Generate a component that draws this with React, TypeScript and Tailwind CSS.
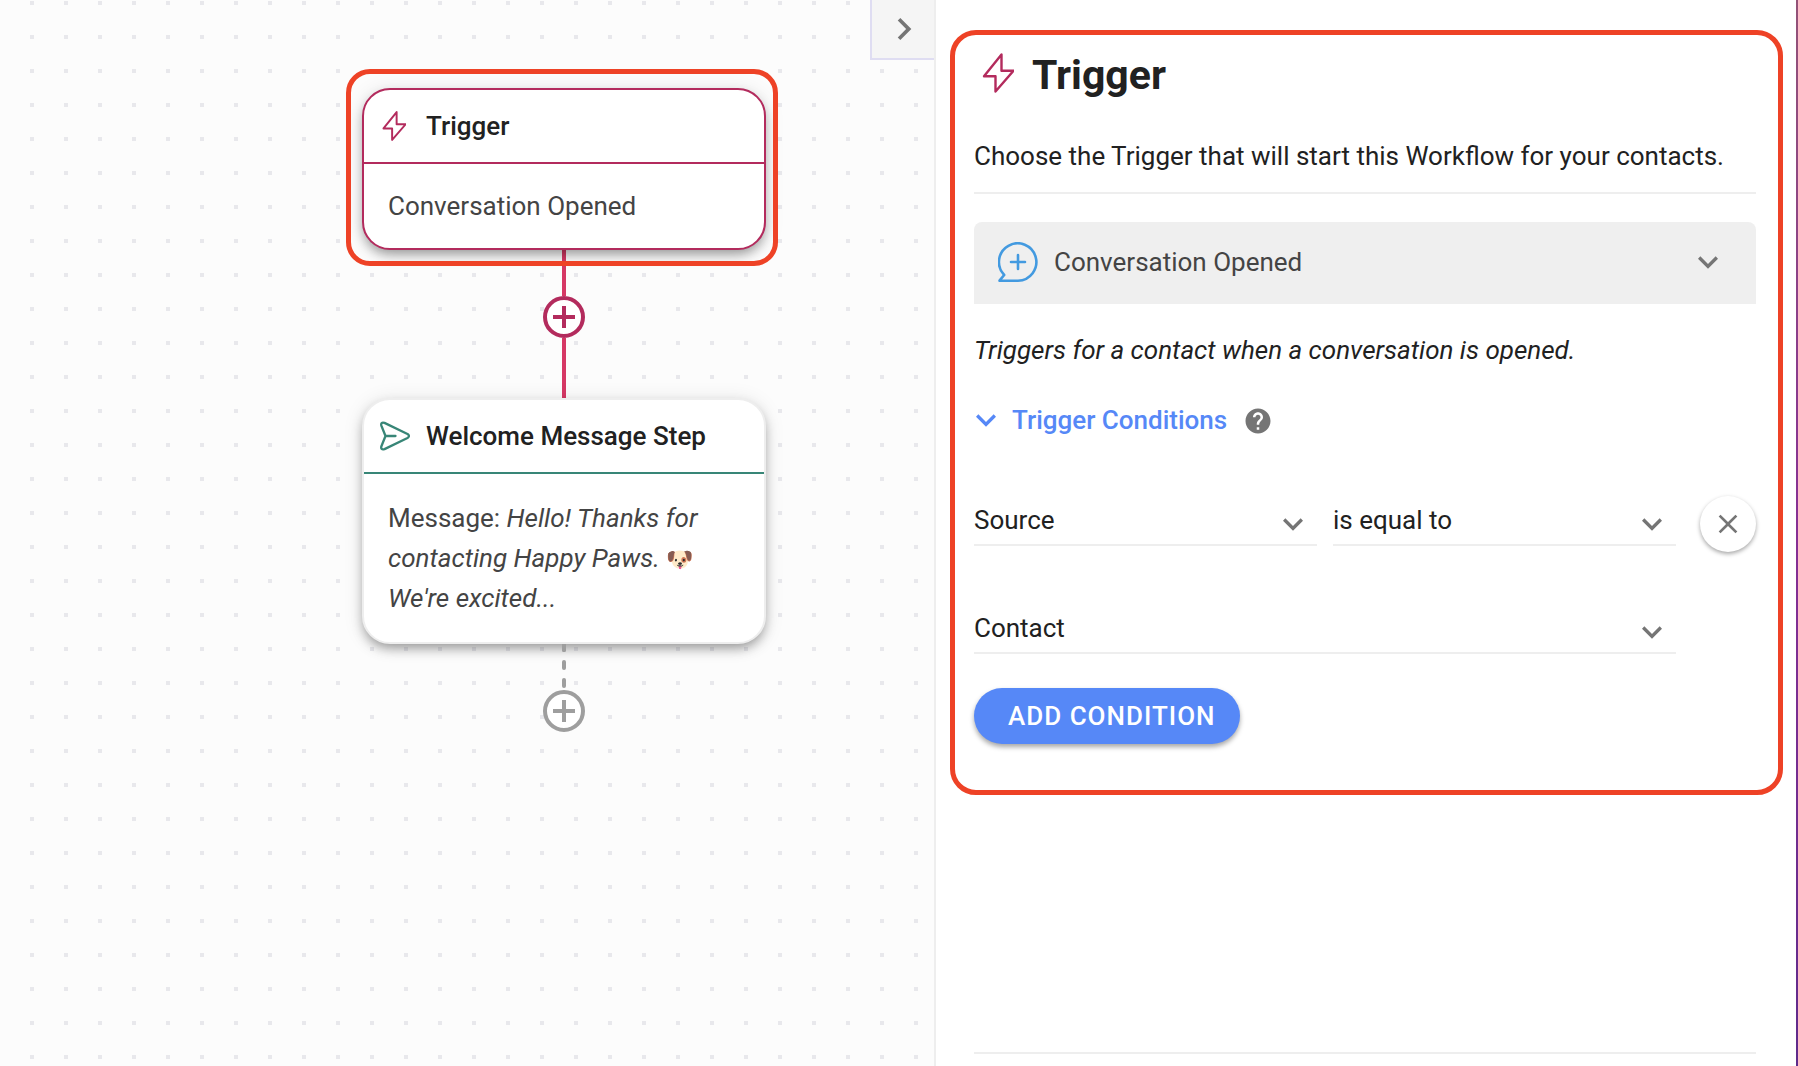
import { useState, type ReactNode } from 'react'
import { MdChevronRight, MdClose, MdExpandMore, MdHelp } from 'react-icons/md'

// ------------------------------------------------------------------
// Icons
// ------------------------------------------------------------------

function BoltIcon({ className, strokeWidth }: { className: string; strokeWidth: number }) {
  return (
    <svg className={className} viewBox="0 0 32 40" fill="none" stroke="currentColor" strokeWidth={strokeWidth} strokeLinejoin="round" aria-hidden="true">
      <path d="M19.500 1.500V17.700H31.500L13.500 38.500V23.200H2Z" />
    </svg>
  )
}

function SendIcon() {
  return (
    <svg className="h-8 w-8 shrink-0" viewBox="0 0 32 32" fill="none" stroke="currentColor" strokeWidth={2.3} strokeLinecap="round" strokeLinejoin="round" aria-hidden="true">
      <path d="M7.500 16H17.500M7.500 16L3.500 6C2.500 3.200 4 2 6.500 2.900L29.500 14Q32.500 16 29.500 18L6.500 29.100C4 30 2.500 28.800 3.500 26Z" />
    </svg>
  )
}

function ChatPlusIcon() {
  return (
    <svg className="h-10 w-10" viewBox="0 0 40 40" fill="none" stroke="currentColor" strokeWidth={2.6} strokeLinecap="round" strokeLinejoin="round" aria-hidden="true">
      <path d="M20 38.700H1.500L6.200 33A18.700 18.700 0 1 1 20 38.700ZM20 13V27M13 20H27" />
    </svg>
  )
}

// ------------------------------------------------------------------
// Canvas
// ------------------------------------------------------------------

interface StepCardProps {
  title: string
  icon: ReactNode
  borderClass: string
  headerClass: string
  bodyClass: string
  children: ReactNode
}

function StepCard({ title, icon, borderClass, headerClass, bodyClass, children }: StepCardProps) {
  return (
    <article className={`w-full rounded-[28px] border-2 bg-white shadow-[0_6px_12px_-2px_rgba(0,0,0,0.36),0_2px_20px_rgba(0,0,0,0.1)] ${borderClass}`}>
      <header className={`flex h-[74px] items-center gap-4 border-b-2 px-[14px] ${headerClass}`}>
        {icon}
        <h2 className="text-[26px] leading-8 font-medium text-[#212121]">{title}</h2>
      </header>
      <div className={`px-6 text-[26px] text-[#444] ${bodyClass}`}>{children}</div>
    </article>
  )
}

function AddStepButton({ className }: { className: string }) {
  return (
    <button type="button" aria-label="Add step" className={`h-[42px] w-[42px] shrink-0 ${className}`}>
      <svg viewBox="0 0 42 42" fill="white" stroke="currentColor" strokeWidth={4} aria-hidden="true">
        <circle cx="21" cy="21" r="19" />
        <path d="M21 10V32M10 21H32" />
      </svg>
    </button>
  )
}

function Canvas() {
  return (
    <main className="relative bg-[#fcfcfc] bg-[conic-gradient(from_270deg_at_4px_4px,#e8e8ec_90deg,transparent_0)] bg-[length:34px_34px] bg-[position:30px_1px]">
      <div className="absolute top-[88px] left-[362px] flex w-[404px] flex-col items-center">
        <div className="relative w-full">
          <StepCard
            title="Trigger"
            icon={
              <span className="flex w-8 justify-center text-[#b32b5d]">
                <BoltIcon className="h-8 w-6" strokeWidth={2.6} />
              </span>
            }
            borderClass="border-[#b32b5d]"
            headerClass="border-[#b32b5d]"
            bodyClass="py-6 leading-9"
          >
            Conversation Opened
          </StepCard>
          <div className="pointer-events-none absolute -top-[19px] -right-3 -bottom-4 -left-4 z-10 rounded-3xl border-[5px] border-[#ee4226]" />
        </div>
        <div className="h-[46px] w-1 bg-[#d63865]" />
        <AddStepButton className="text-[#b32b5d]" />
        <div className="h-[60px] w-1 bg-[#d63865]" />
        <StepCard
          title="Welcome Message Step"
          icon={
            <span className="text-[#388677]">
              <SendIcon />
            </span>
          }
          borderClass="border-[#eee]"
          headerClass="border-[#388677]"
          bodyClass="py-6 leading-10"
        >
          Message:{' '}
          <em>
            Hello! Thanks for contacting Happy Paws. <span className="text-[22px] leading-none not-italic">🐶</span> We're excited...
          </em>
        </StepCard>
        <svg className="h-[46px] w-1" viewBox="0 0 4 46" fill="#9e9e9e" aria-hidden="true">
          <rect y="-4" width="4" height="12" rx="1.500" />
          <rect y="16" width="4" height="10" rx="2" />
          <rect y="34" width="4" height="10" rx="2" />
        </svg>
        <AddStepButton className="text-[#9e9e9e]" />
      </div>
      <button type="button" aria-label="Collapse panel" className="absolute top-0 right-0 flex h-[60px] w-16 items-center justify-center border-b-2 border-l-2 border-[#dfddf2] bg-[#f5f5f5] pl-0.5 text-[#757575]">
        <MdChevronRight size={44} />
      </button>
    </main>
  )
}

// ------------------------------------------------------------------
// Side panel
// ------------------------------------------------------------------

function ConditionSelect({ label, options }: { label: string; options: string[] }) {
  const [value, setValue] = useState(options[0])

  return (
    <div className="relative min-w-0 flex-1">
      <select
        aria-label={label}
        value={value}
        onChange={(e) => setValue(e.target.value)}
        className="block h-[50px] w-full appearance-none border-b-2 border-[#eee] bg-white pr-12 text-[26px] leading-8 text-[#212121]"
      >
        {options.map((option) => (
          <option key={option}>{option}</option>
        ))}
      </select>
      <MdExpandMore size={40} className="pointer-events-none absolute right-1 bottom-0.5 text-[#757575]" />
    </div>
  )
}

function TriggerPanel() {
  const [open, setOpen] = useState(true)

  return (
    <aside className="flex flex-col border-l-2 border-[#eee] bg-white pb-3">
      <section className="mt-[30px] mr-[13px] ml-[14px] flex flex-col rounded-[26px] border-[5px] border-[#ee4226] pr-[22px] pb-[46px] pl-[19px] text-[26px] leading-8 text-[#212121]">
        <div className="flex h-20 items-center gap-[18px] pl-2">
          <BoltIcon className="mb-1 h-10 w-8 text-[#b32b5d]" strokeWidth={2.4} />
          <h1 className="text-[41px] leading-[48px] font-bold">Trigger</h1>
        </div>
        <p className="mt-[25px] border-b-2 border-[#eee] pb-5">Choose the Trigger that will start this Workflow for your contacts.</p>

        <div className="relative mt-7">
          <span className="pointer-events-none absolute top-5 left-6 text-[#439ae0]">
            <ChatPlusIcon />
          </span>
          <select aria-label="Trigger type" className="block h-[82px] w-full appearance-none rounded-t-lg bg-[#efefef] pr-16 pb-0.5 pl-20 text-[26px] leading-8 text-[#444]">
            <option>Conversation Opened</option>
            <option>Conversation Closed</option>
          </select>
          <MdExpandMore size={40} className="pointer-events-none absolute top-5 right-7 text-[#757575]" />
        </div>

        <p className="mt-[30px] italic">Triggers for a contact when a conversation is opened.</p>

        <div className="mt-[38px] flex items-center gap-4">
          <button type="button" aria-expanded={open} onClick={() => setOpen(!open)} className="-ml-2 flex items-center gap-1.5 font-medium text-[#5688f7]">
            <MdExpandMore size={40} className="-my-1" />
            Trigger Conditions
          </button>
          <MdHelp size={30} className="mt-0.5 text-[#757575]" />
        </div>

        {open && (
          <>
            <div className="mt-[60px] flex gap-6">
              <div className="flex flex-1 flex-col gap-[58px]">
                <div className="flex gap-4">
                  <ConditionSelect label="Field" options={['Source', 'Channel']} />
                  <ConditionSelect label="Operator" options={['is equal to', 'is not equal to']} />
                </div>
                <div className="flex">
                  <ConditionSelect label="Value" options={['Contact', 'User', 'Workflow']} />
                </div>
              </div>
              <button type="button" aria-label="Remove condition" className="flex h-14 w-14 items-center justify-center rounded-full bg-white text-[#757575] shadow-[0_2px_4px_rgba(0,0,0,0.35)]">
                <MdClose size={32} />
              </button>
            </div>
            <button type="button" className="mt-[34px] h-14 self-start rounded-full bg-[#5688f7] pr-6 pl-[34px] font-medium tracking-[1px] text-white uppercase shadow-[0_3px_5px_rgba(0,0,0,0.35)]">
              Add condition
            </button>
          </>
        )}
      </section>
      <hr className="mt-auto mr-10 ml-[38px] border-t-2 border-[#eee]" />
    </aside>
  )
}

export default function App() {
  return (
    <div className="flex min-h-screen bg-white font-[Roboto,sans-serif]">
      <div className="grid flex-1 grid-cols-[467fr_431fr]">
        <Canvas />
        <TriggerPanel />
      </div>
      <div className="w-[2px] bg-linear-to-b from-[#935277] via-[#862f93] to-[#5f2a8a]" />
    </div>
  )
}
